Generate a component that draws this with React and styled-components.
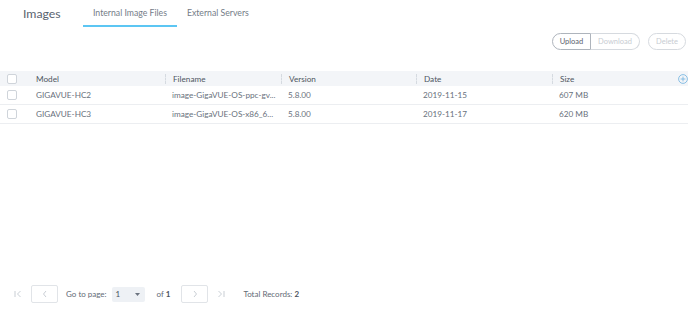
import React from "react";
import styled, { createGlobalStyle } from "styled-components";

const Global = createGlobalStyle`
  html, body { margin: 0; padding: 0; background: #fff; }
  body { font-family: Lato, "Open Sans", sans-serif; color: #5f6773; }
`;

const Page = styled.div`
  width: 694px;
  height: 313px;
  display: flex;
  flex-direction: column;
`;

const TopBar = styled.div`
  display: flex;
  align-items: flex-start;
  padding-left: 23px;
  height: 27px;
`;

const Title = styled.div`
  font-size: 12.3px;
  color: #59636f;
  padding-top: 6px;
  width: 60px;
`;

const Tabs = styled.div`
  display: flex;
`;

const Tab = styled.div`
  font-size: 8.7px;
  color: #747c87;
  padding: 7px 10px 0;
  height: 18px;
  box-sizing: content-box;
  border-bottom: 2px solid ${(p) => (p.$active ? "#5cc6f3" : "transparent")};
`;

const Toolbar = styled.div`
  display: flex;
  justify-content: flex-end;
  gap: 8px;
  padding: 6px 8px 0 0;
  height: 17px;
`;

const Group = styled.div`
  display: flex;
`;

const Btn = styled.button`
  font-family: inherit;
  font-size: 7.5px;
  height: 17px;
  width: ${(p) => p.$w};
  padding: 0;
  background: #fff;
  color: ${(p) => (p.$disabled ? "#c7ccd2" : "#5a626e")};
  border: 1px solid ${(p) => (p.$disabled ? "#d6dadf" : "#aeb4bc")};
  border-radius: ${(p) => p.$radius || "9px"};
  ${(p) => (p.$noLeft ? "border-left: none;" : "")}
  cursor: default;
`;

const Table = styled.div`
  margin-top: 21px;
  width: 688px;
  position: relative;
`;

const Row = styled.div`
  display: grid;
  grid-template-columns: 29px 136px 116px 135px 136px 136px;
  height: ${(p) => (p.$head ? "15px" : "18px")};
  align-items: center;
  font-size: 8.2px;
  background: ${(p) => (p.$head ? "#f3f5f8" : "#fff")};
  color: ${(p) => (p.$head ? "#4d5561" : "#69717c")};
  border-bottom: ${(p) => (p.$head ? "none" : "1px solid #eceef1")};
`;

const Cell = styled.div`
  padding-left: 7px;
  white-space: nowrap;
  overflow: hidden;
  border-left: ${(p) => (p.$sep ? "1px dashed #d5dae0" : "none")};
  height: 10px;
  line-height: 10px;
`;

const CheckCell = styled.div`
  display: flex;
  padding-left: 7px;
`;

const Box = styled.span`
  width: 8px;
  height: 8px;
  border: 1px solid #cfd4da;
  border-radius: 2px;
  background: #fff;
`;

const AddIcon = styled.svg`
  position: absolute;
  right: 0;
  top: 3px;
`;

const Spacer = styled.div`
  flex: 1;
`;

const Pager = styled.div`
  display: flex;
  align-items: center;
  padding: 0 0 10px 14px;
  font-size: 8px;
  color: #626a75;
  height: 18px;
`;

const Edge = styled.span`
  display: flex;
  align-items: center;
  width: ${(p) => p.$w || "17px"};
`;

const NavBtn = styled.div`
  width: 25px;
  height: 16px;
  border: 1px solid #e1e4e8;
  border-radius: 2px;
  display: flex;
  align-items: center;
  justify-content: center;
  margin-right: ${(p) => p.$mr || "8px"};
`;

const Label = styled.span`
  margin-right: ${(p) => p.$mr || "5px"};
  b { font-weight: 700; color: #4a525e; }
`;

const Select = styled.div`
  width: 33px;
  height: 15px;
  background: #eef1f5;
  border-radius: 2px;
  display: flex;
  align-items: center;
  justify-content: space-between;
  padding: 0 5px 0 4px;
  box-sizing: border-box;
  margin-right: 12px;
  color: #4a525e;
`;

const Chevron = ({ dir }) => (
  <svg width="6" height="8" viewBox="0 0 6 8">
    <path
      d={dir === "left" ? "M4 1 L1.5 4 L4 7" : "M2 1 L4.5 4 L2 7"}
      fill="none"
      stroke="#c3c8cf"
      strokeWidth="0.9"
    />
  </svg>
);

const EdgeIcon = ({ dir }) => (
  <svg width="8" height="8" viewBox="0 0 8 8">
    {dir === "left" ? (
      <>
        <path d="M1 1 V7" stroke="#c3c8cf" strokeWidth="0.9" />
        <path d="M6.5 1 L3.5 4 L6.5 7" fill="none" stroke="#c3c8cf" strokeWidth="0.9" />
      </>
    ) : (
      <>
        <path d="M1.5 1 L4.5 4 L1.5 7" fill="none" stroke="#c3c8cf" strokeWidth="0.9" />
        <path d="M7 1 V7" stroke="#c3c8cf" strokeWidth="0.9" />
      </>
    )}
  </svg>
);

const rows = [
  ["GIGAVUE-HC2", "image-GigaVUE-OS-ppc-gv...", "5.8.00", "2019-11-15", "607 MB"],
  ["GIGAVUE-HC3", "image-GigaVUE-OS-x86_6...", "5.8.00", "2019-11-17", "620 MB"],
];

export default function App() {
  return (
    <>
      <Global />
      <Page>
        <TopBar>
          <Title>Images</Title>
          <Tabs>
            <Tab $active>Internal Image Files</Tab>
            <Tab>External Servers</Tab>
          </Tabs>
        </TopBar>
        <Toolbar>
          <Group>
            <Btn $w="39px" $radius="9px 0 0 9px">Upload</Btn>
            <Btn $w="49px" $disabled $noLeft $radius="0 9px 9px 0">Download</Btn>
          </Group>
          <Btn $w="38px" $disabled>Delete</Btn>
        </Toolbar>
        <Table>
          <Row $head>
            <CheckCell><Box /></CheckCell>
            <Cell>Model</Cell>
            <Cell $sep>Filename</Cell>
            <Cell $sep>Version</Cell>
            <Cell $sep>Date</Cell>
            <Cell $sep>Size</Cell>
          </Row>
          {rows.map((r) => (
            <Row key={r[0]}>
              <CheckCell><Box /></CheckCell>
              {r.map((c, i) => (
                <Cell key={i}>{c}</Cell>
              ))}
            </Row>
          ))}
          <AddIcon width="10" height="10" viewBox="0 0 10 10">
            <circle cx="5" cy="5" r="4.4" fill="none" stroke="#6fb3df" strokeWidth="0.8" />
            <path d="M5 2.6 V7.4 M2.6 5 H7.4" stroke="#6fb3df" strokeWidth="0.8" />
          </AddIcon>
        </Table>
        <Spacer />
        <Pager>
          <Edge $w="17px"><EdgeIcon dir="left" /></Edge>
          <NavBtn><Chevron dir="left" /></NavBtn>
          <Label>Go to page:</Label>
          <Select>
            <span>1</span>
            <svg width="5" height="3" viewBox="0 0 5 3"><path d="M0 0 H5 L2.5 3Z" fill="#6c7480" /></svg>
          </Select>
          <Label $mr="11px">of <b>1</b></Label>
          <NavBtn $mr="9px"><Chevron dir="right" /></NavBtn>
          <Edge $w="26px"><EdgeIcon dir="right" /></Edge>
          <Label>Total Records: <b>2</b></Label>
        </Pager>
      </Page>
    </>
  );
}
